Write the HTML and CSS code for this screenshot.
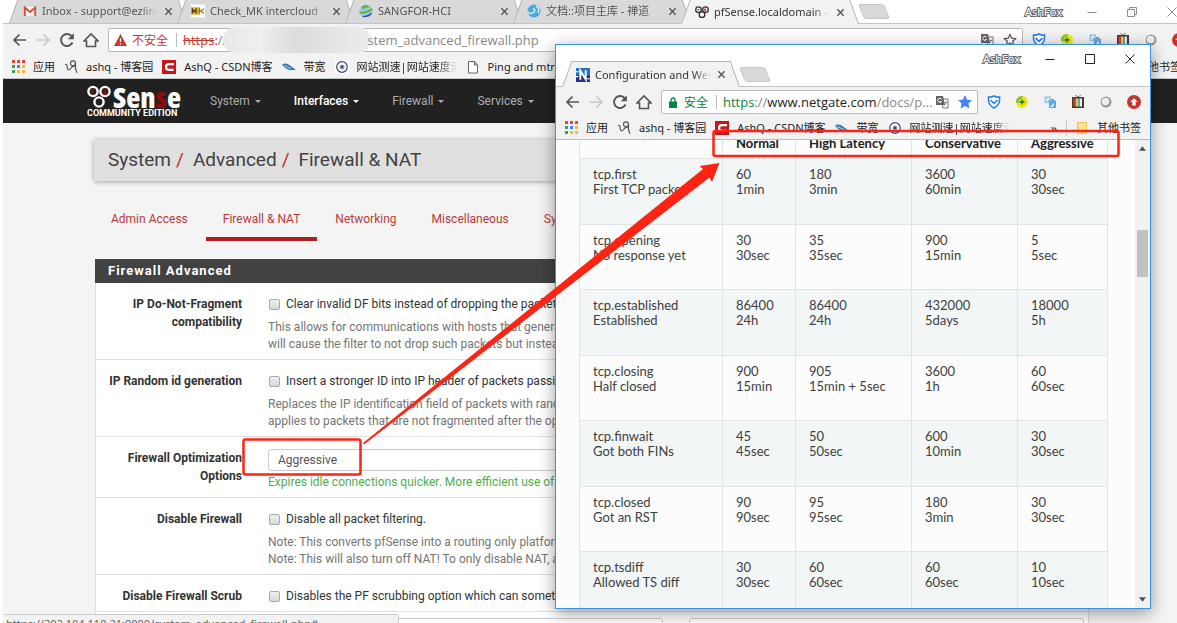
FILE: index.html
```html
<!DOCTYPE html>
<html lang="zh-CN">
<head>
<meta charset="utf-8">
<title>pfSense.localdomain - System: Advanced: Firewall &amp; NAT</title>
<link rel="stylesheet" href="styles.css">
</head>
<body>
<svg class="defs" aria-hidden="true">
  <symbol id="i-back" viewBox="0 0 16 16"><path d="M15 8H3M8.500 2.500L3 8l5.500 5.500" fill="none" stroke="currentColor" stroke-width="1.700"/></symbol>
  <symbol id="i-fwd" viewBox="0 0 16 16"><path d="M2 8h12M8.500 2.500L14 8l-5.500 5.500" fill="none" stroke="currentColor" stroke-width="1.700"/></symbol>
  <symbol id="i-reload" viewBox="0 0 16 16"><path d="M13.500 10.500A6 6 0 1 1 12.800 4.300" fill="none" stroke="currentColor" stroke-width="1.900"/><path d="M14.800 1.200v6H8.800z" fill="currentColor"/></symbol>
  <symbol id="i-home" viewBox="0 0 16 16"><path d="M1 9L8 2l7 7H12.500v5.500h-9V9z" fill="none" stroke="currentColor" stroke-width="1.600"/></symbol>
  <symbol id="i-close" viewBox="0 0 10 10"><path d="M1.500 1.500l7 7M8.500 1.500l-7 7" stroke="currentColor" stroke-width="1.500"/></symbol>
  <symbol id="i-x" viewBox="0 0 12 12"><path d="M1.500 1.500l9 9M10.500 1.500l-9 9" stroke="currentColor" stroke-width="1"/></symbol>
  <symbol id="i-min" viewBox="0 0 12 12"><path d="M1.500 6.500h9" stroke="currentColor"/></symbol>
  <symbol id="i-max" viewBox="0 0 12 12"><path d="M1.500 1.500h9v9h-9z" fill="none" stroke="currentColor"/></symbol>
  <symbol id="i-restore" viewBox="0 0 12 12"><path d="M3.500 3.500v-2h7v7h-2M1.500 3.500h7v7h-7z" fill="none" stroke="currentColor"/></symbol>
  <symbol id="i-apps" viewBox="0 0 13 13"><g><path d="M0 0h3v3H0zM5 0h3v3H5zM10 0h3v3h-3z" fill="#e8453c"/><path d="M0 5h3v3H0z" fill="#34a853"/><path d="M5 5h3v3H5z" fill="#4285f4"/><path d="M10 5h3v3h-3z" fill="#f9bb2d"/><path d="M0 10h3v3H0z" fill="#34a853"/><path d="M5 10h3v3H5zM10 10h3v3h-3z" fill="#f9bb2d"/></g></symbol>
  <symbol id="i-sig" viewBox="0 0 14 14"><g fill="none" stroke="#555" stroke-width="1.200"><circle cx="9" cy="3.300" r="2.500"/><path d="M11.500 3.300v5.500l1.500 4M1 4.500c2-1 2 1 2.300 3.500s2.200 2.500 3.700 0 3-1.500 4.500-2"/></g></symbol>
  <symbol id="i-csdn" viewBox="0 0 14 14"><path d="M0 0h14v14H0z" fill="#c8141b"/><path d="M12 4.200H7Q4 4.200 4 7t3 2.800h4.500" fill="none" stroke="#fff" stroke-width="2.200"/></symbol>
  <symbol id="i-band" viewBox="0 0 14 14"><path d="M0 4.500c3-2 6-1 8 1l6 4.500-4 0C6 10 2 8 0 4.500z" fill="#2f79b5"/><path d="M2 5.500l7 3" stroke="#b8d4ea"/></symbol>
  <symbol id="i-eye" viewBox="0 0 14 14"><path d="M0 0h14v14H0z" fill="#fff"/><circle cx="7" cy="7" r="5.300" fill="none" stroke="#3d4470" stroke-width="1.200"/><circle cx="7" cy="7" r="2" fill="#3d4470" stroke="#9fa4c4" stroke-width="1.200"/></symbol>
  <symbol id="i-page" viewBox="0 0 14 14"><path d="M2.500 1.500h6L11.500 5v8h-9zM8.500 1.500V5h3" fill="#fff" stroke="#666"/></symbol>
  <symbol id="i-translate" viewBox="0 0 14 14"><path d="M6 4h7v9H8z" fill="#fff" stroke="#777"/><path d="M1 1h7l2 9H1z" fill="#666"/><path d="M6.500 4.300A2 2 0 1 0 6.500 6.500H5" fill="none" stroke="#fff"/><path d="M9.500 7.500h3M11 6.500v1q-.5 2-1.500 3" fill="none" stroke="#777" stroke-width=".8"/></symbol>
  <symbol id="i-star" viewBox="0 0 14 14"><path d="M7 1.500l1.700 3.700 4 .4-3 2.700.9 4L7 10.200l-3.600 2.100.9-4-3-2.700 4-.4z" stroke="currentColor" stroke-width="1.200"/></symbol>
  <symbol id="i-shield" viewBox="0 0 14 14"><path d="M7 1q3 1.500 5.500 1v3.500Q12 10.500 7 13 2 10.500 1.500 5.500V2Q4 2.500 7 1z" fill="#fff" stroke="#2d7ff0" stroke-width="1.600"/><path d="M3.500 5L7 8.300 10.500 5" fill="none" stroke="#2d7ff0" stroke-width="1.700"/></symbol>
  <symbol id="i-plus" viewBox="0 0 14 14"><circle cx="7" cy="7" r="6" fill="#f4e41a"/><path d="M1 8A6 6 0 0 1 8 1L7 3.500Q4 4 3.500 8z" fill="#8ac43a"/><path d="M7 4.500v5M4.500 7h5" stroke="#348c2b" stroke-width="1.800"/></symbol>
  <symbol id="i-sync" viewBox="0 0 14 14"><path d="M1.500 1.500H8v6.500H1.500z" fill="#8fc8ee"/><path d="M6 5.500h7V13H6z" fill="#5da8df"/><path d="M3.500 6.500q0-3 3-3M10.500 8.500q0 3-3 3" fill="none" stroke="#fff" stroke-width="1.300"/><path d="M8 4h3l-1.500 2z" fill="#2f7fbf"/></symbol>
  <symbol id="i-tv" viewBox="0 0 14 14"><path d="M4 0l3 2 3-2" fill="none" stroke="#888"/><path d="M1 2h12v11H1z" fill="#4a3a35"/><path d="M2.500 3.500h2.500v8H2.500z" fill="#d5453a"/><path d="M5 3.500h2v8H5z" fill="#f3c33c"/><path d="M7 3.500h2v8H7z" fill="#4eb2bd"/><path d="M9 3.500h2v8H9z" fill="#eee"/></symbol>
  <symbol id="i-ball" viewBox="0 0 14 14"><circle cx="7" cy="7" r="5.500" fill="#999"/><circle cx="6.500" cy="6.500" r="3.800" fill="#eee"/></symbol>
  <symbol id="i-up" viewBox="0 0 14 14"><circle cx="7" cy="7" r="7" fill="#c5372c"/><path d="M7 3.200L10.800 7H8.700v3.500H5.300V7H3.200z" fill="#fff"/></symbol>
  <symbol id="i-folder" viewBox="0 0 12 14"><path d="M1.500 1.500h9v11h-9z" fill="#fce28c" stroke="#e8c052"/></symbol>
  <symbol id="i-gmail" viewBox="0 0 14 14"><path d="M1 2.500h12v9.500H1z" fill="#f1f1f1"/><path d="M1.800 12V3.500L7 8l5.200-4.500V12" fill="none" stroke="#dd4b3e" stroke-width="1.900"/></symbol>
  <symbol id="i-mk" viewBox="0 0 15 14"><path d="M0 0h15v14H0z" fill="#fff"/><path d="M0 3h9.500v8H0z" fill="#f0b323"/><path d="M1.500 10V5l2 3 2-3v5" fill="none" stroke="#4c3d17" stroke-width="1.200"/><path d="M14 4.500l-4 2.500 4 2.500M9.500 4l-1 3 1 3" fill="none" stroke="#8d6f1c" stroke-width="1.200"/></symbol>
  <symbol id="i-globe" viewBox="0 0 14 14"><circle cx="7" cy="7" r="6.500" fill="#9ccbe6"/><path d="M2 3q5-4 9 0L4 5zM0 8q7 0 13-4l.5 2Q8 10 1 10z" fill="#67b246"/><path d="M3 12q6 0 10-4l-1 3q-4 3-8 2z" fill="#2c5b97"/></symbol>
  <symbol id="i-zen" viewBox="0 0 14 14"><circle cx="7" cy="7" r="6.500" fill="#4ba7df"/><path d="M1 8q3 3 6 0 2-3-1-3M9 2q4 2 2 7" fill="none" stroke="#d9f1ff" stroke-width="1.500"/></symbol>
  <symbol id="i-pf" viewBox="0 0 16 14"><g fill="#fff" stroke="currentColor" stroke-width="1.500"><circle cx="4" cy="4.300" r="3.200"/><circle cx="12" cy="4.300" r="3.200"/><circle cx="8" cy="10" r="3.200"/></g><path d="M3 4.300h2M11.500 3v3" stroke="#9a0a0e" stroke-width="1.500"/></symbol>
  <symbol id="i-net" viewBox="0 0 13 13"><path d="M0 0h13v13H0z" fill="#2374bd"/><path d="M0 7h13v6H0z" fill="#2c2e83"/><path d="M0 3.500h3M10 10h3M0 8h2" stroke="#fff"/><path d="M4 11V2.500l5 8V2" fill="none" stroke="#fff" stroke-width="1.800"/></symbol>
</svg>

<div class="desktop">
  <main class="browser">
    <div class="strip">
      <div class="tabs">
        <div class="tab"><svg class="ic"><use href="#i-gmail"/></svg><span class="tab-title">Inbox - support@ezlink</span><button class="tab-close" aria-label="Close tab"><svg><use href="#i-close"/></svg></button></div>
        <div class="tab"><svg class="ic"><use href="#i-mk"/></svg><span class="tab-title">Check_MK intercloud -</span><button class="tab-close" aria-label="Close tab"><svg><use href="#i-close"/></svg></button></div>
        <div class="tab"><svg class="ic"><use href="#i-globe"/></svg><span class="tab-title">SANGFOR-HCI</span><button class="tab-close" aria-label="Close tab"><svg><use href="#i-close"/></svg></button></div>
        <div class="tab"><svg class="ic"><use href="#i-zen"/></svg><span class="tab-title">文档::项目主库 - 禅道</span><button class="tab-close" aria-label="Close tab"><svg><use href="#i-close"/></svg></button></div>
        <div class="tab tab-on"><svg class="ic"><use href="#i-pf"/></svg><span class="tab-title">pfSense.localdomain -</span><button class="tab-close" aria-label="Close tab"><svg><use href="#i-close"/></svg></button></div>
        <button class="newtab" aria-label="New tab"></button>
      </div>
      <div class="controls controls-dim"><span class="user">AshFox</span><button aria-label="Minimize"><svg><use href="#i-min"/></svg></button><button aria-label="Restore"><svg><use href="#i-restore"/></svg></button><button aria-label="Close"><svg><use href="#i-x"/></svg></button></div>
    </div>
    <div class="toolbar">
      <button class="nav" aria-label="Back"><svg><use href="#i-back"/></svg></button><button class="nav nav-off" aria-label="Forward"><svg><use href="#i-fwd"/></svg></button><button class="nav" aria-label="Reload"><svg><use href="#i-reload"/></svg></button><button class="nav" aria-label="Home"><svg><use href="#i-home"/></svg></button>
      <div class="omni">
        <svg class="warn" viewBox="0 0 13 12"><path d="M6.500 0L13 12H0z" fill="#c5372c"/><path d="M6.500 4v4M6.500 9v1.500" stroke="#fff" stroke-width="1.300"/></svg>
        <span class="insecure">不安全</span><span class="bar"></span><span class="url"><s>https</s><em>:</em>//</span>
        <span class="mosaic"></span><span class="url">stem_advanced_firewall.php</span>
        <span class="omni-end"><svg class="ic"><use href="#i-translate"/></svg><svg class="ic star"><use href="#i-star"/></svg></span>
      </div>
      <div class="exts"><svg><use href="#i-shield"/></svg><svg><use href="#i-plus"/></svg><svg><use href="#i-sync"/></svg><svg><use href="#i-tv"/></svg><svg><use href="#i-ball"/></svg><svg><use href="#i-up"/></svg></div>
    </div>
    <nav class="marks">
      <a href="#"><svg class="apps"><use href="#i-apps"/></svg>应用</a>
      <a href="#"><svg class="ic"><use href="#i-sig"/></svg>ashq - 博客园</a>
      <a href="#"><svg class="ic"><use href="#i-csdn"/></svg>AshQ - CSDN博客</a>
      <a href="#"><svg class="ic"><use href="#i-band"/></svg>带宽</a>
      <a href="#"><svg class="ic"><use href="#i-eye"/></svg><span class="fade">网站测速|网站速度测</span></a>
      <a href="#"><svg class="ic"><use href="#i-page"/></svg>Ping and mtr</a>
      <a class="marks-other" href="#">其他书签</a>
    </nav>

    <header class="pfnav">
      <a class="logo" href="#" aria-label="pfSense Community Edition">
        <span class="logo-row"><svg class="logo-mark" viewBox="0 0 24 24"><g fill="#222" stroke="#fff" stroke-width="2.400"><circle cx="6" cy="6.500" r="4.600"/><circle cx="18" cy="6.500" r="4.600"/><circle cx="12" cy="17" r="4.600"/></g><path d="M5.500 4v5M18 4v6" stroke="#8d0a0d" stroke-width="3"/></svg><b>Sen<i>s</i>e</b></span>
        <span class="logo-sub">COMMUNITY EDITION</span>
      </a>
      <nav class="menu"><a href="#">System</a><a class="menu-on" href="#">Interfaces</a><a href="#">Firewall</a><a href="#">Services</a></nav>
    </header>

    <div class="page">
      <h1 class="crumbs">System<i>/</i>Advanced<i>/</i>Firewall &amp; NAT</h1>
      <nav class="subtabs"><a href="#">Admin Access</a><a class="sub-on" href="#">Firewall &amp; NAT</a><a href="#">Networking</a><a href="#">Miscellaneous</a><a href="#">System Tunables</a></nav>
      <form class="panel">
        <h2>Firewall Advanced</h2>
        <div class="row">
          <div class="label">IP Do-Not-Fragment compatibility</div>
          <div class="field"><label><input type="checkbox">Clear invalid DF bits instead of dropping the packets</label>
            <p>This allows for communications with hosts that generate fragmented packets<br>will cause the filter to not drop such packets but instead clear the bit</p></div>
        </div>
        <div class="row">
          <div class="label">IP Random id generation</div>
          <div class="field"><label><input type="checkbox">Insert a stronger ID into IP header of packets passing</label>
            <p>Replaces the IP identification field of packets with random values<br>applies to packets that are not fragmented after the optional</p></div>
        </div>
        <div class="row">
          <label class="label" for="opt">Firewall Optimization Options</label>
          <div class="field"><select id="opt"><option>Aggressive</option></select><p class="good">Expires idle connections quicker. More efficient use of CPU</p></div>
        </div>
        <div class="row">
          <div class="label">Disable Firewall</div>
          <div class="field"><label><input type="checkbox">Disable all packet filtering.</label>
            <p>Note: This converts pfSense into a routing only platform!<br>Note: This will also turn off NAT! To only disable NAT, and</p></div>
        </div>
        <div class="row">
          <div class="label">Disable Firewall Scrub</div>
          <div class="field"><label><input type="checkbox">Disables the PF scrubbing option which can sometimes</label></div>
        </div>
        <div class="row row-last">
          <div class="label"></div>
          <div class="field pair"><input type="text" aria-label="Adaptive start"><input type="text" aria-label="Adaptive end"></div>
        </div>
      </form>
    </div>
    <div class="status">https://202.104.118.21:9090/system_advanced_firewall.php#</div>
  </main>

  <section class="browser popup">
    <div class="strip">
      <div class="tabs">
        <div class="tab tab-on"><svg class="ic"><use href="#i-net"/></svg><span class="tab-title">Configuration and Web</span><button class="tab-close" aria-label="Close tab"><svg><use href="#i-close"/></svg></button></div>
        <button class="newtab" aria-label="New tab"></button>
      </div>
      <div class="controls"><span class="user">AshFox</span><button aria-label="Minimize"><svg><use href="#i-min"/></svg></button><button aria-label="Maximize"><svg><use href="#i-max"/></svg></button><button aria-label="Close"><svg><use href="#i-x"/></svg></button></div>
    </div>
    <div class="toolbar">
      <button class="nav" aria-label="Back"><svg><use href="#i-back"/></svg></button><button class="nav nav-off" aria-label="Forward"><svg><use href="#i-fwd"/></svg></button><button class="nav" aria-label="Reload"><svg><use href="#i-reload"/></svg></button><button class="nav" aria-label="Home"><svg><use href="#i-home"/></svg></button>
      <div class="omni">
        <svg class="lock" viewBox="0 0 8 11"><path d="M2 5V3a2 2 0 0 1 4 0v2" fill="none" stroke="#0b8043" stroke-width="1.300"/><path d="M0 4.500h8V11H0z" fill="#0b8043"/></svg>
        <span class="secure">安全</span><span class="bar"></span><span class="url"><span class="secure">https</span>://<b>www.netgate.com</b>/docs/p...</span>
        <span class="omni-end"><svg class="ic"><use href="#i-translate"/></svg><svg class="ic star star-on"><use href="#i-star"/></svg></span>
      </div>
      <div class="exts"><svg><use href="#i-shield"/></svg><svg><use href="#i-plus"/></svg><svg><use href="#i-sync"/></svg><svg><use href="#i-tv"/></svg><svg><use href="#i-ball"/></svg><svg><use href="#i-up"/></svg></div>
    </div>
    <nav class="marks">
      <a href="#"><svg class="apps"><use href="#i-apps"/></svg>应用</a>
      <a href="#"><svg class="ic"><use href="#i-sig"/></svg>ashq - 博客园</a>
      <a href="#"><svg class="ic"><use href="#i-csdn"/></svg>AshQ - CSDN博客</a>
      <a href="#"><svg class="ic"><use href="#i-band"/></svg>带宽</a>
      <a href="#"><svg class="ic"><use href="#i-eye"/></svg><span class="fade">网站测速|网站速度测</span></a>
      <span class="more">»</span>
      <a class="marks-folder" href="#"><svg class="ic"><use href="#i-folder"/></svg>其他书签</a>
    </nav>
    <div class="view">
      <table>
        <colgroup><col class="c1"><col class="c2"><col class="c3"><col class="c4"><col class="c5"></colgroup>
        <thead><tr><th></th><th>Normal</th><th>High Latency</th><th>Conservative</th><th>Aggressive</th></tr></thead>
        <tbody>
          <tr><td>tcp.first<br>First TCP packet</td><td>60<br>1min</td><td>180<br>3min</td><td>3600<br>60min</td><td>30<br>30sec</td></tr>
          <tr><td>tcp.opening<br>No response yet</td><td>30<br>30sec</td><td>35<br>35sec</td><td>900<br>15min</td><td>5<br>5sec</td></tr>
          <tr><td>tcp.established<br>Established</td><td>86400<br>24h</td><td>86400<br>24h</td><td>432000<br>5days</td><td>18000<br>5h</td></tr>
          <tr><td>tcp.closing<br>Half closed</td><td>900<br>15min</td><td>905<br>15min + 5sec</td><td>3600<br>1h</td><td>60<br>60sec</td></tr>
          <tr><td>tcp.finwait<br>Got both FINs</td><td>45<br>45sec</td><td>50<br>50sec</td><td>600<br>10min</td><td>30<br>30sec</td></tr>
          <tr><td>tcp.closed<br>Got an RST</td><td>90<br>90sec</td><td>95<br>95sec</td><td>180<br>3min</td><td>30<br>30sec</td></tr>
          <tr><td>tcp.tsdiff<br>Allowed TS diff</td><td>30<br>30sec</td><td>60<br>60sec</td><td>60<br>60sec</td><td>10<br>10sec</td></tr>
        </tbody>
      </table>
      <div class="scroll"><svg viewBox="0 0 8 5"><path d="M0 5l4-5 4 5z" fill="#505050"/></svg><span class="thumb"></span><svg viewBox="0 0 8 5"><path d="M0 0l4 5 4-5z" fill="#505050"/></svg></div>
    </div>
  </section>

  <svg class="marker" aria-hidden="true">
    <g fill="none" stroke="#ff2314" stroke-width="2.500"><rect x="243.500" y="439.500" width="117" height="35" rx="2"/><rect x="713.500" y="131" width="405" height="25" rx="2"/></g>
    <path d="M363 443L703 169 699.500 166 719.500 163 712 182 709.500 177.500 364 444.500z" fill="#ff2314"/>
  </svg>
</div>
</body>
</html>
```
FILE: styles.css
```css
* { box-sizing: border-box; }
body { margin: 0; background: #fff; font-family: "Noto Sans", "Noto Sans CJK SC", sans-serif; font-size: 12px; color: #333; }
button { border: 0; padding: 0; background: none; color: inherit; font: inherit; display: flex; }
a { color: inherit; text-decoration: none; }
.defs { position: absolute; width: 0; height: 0; }
.desktop { position: relative; height: 100vh; overflow: hidden; }

.browser { display: flex; flex-direction: column; background: #fff; }
main.browser { height: 100%; margin-left: 3px; }
.popup { position: absolute; left: 555px; top: 44px; width: 596px; height: 565px; border: 1px solid #3a92dc; box-shadow: 0 4px 16px rgba(0, 0, 0, .4); }

/* tab strip */
.strip { display: flex; justify-content: space-between; flex: none; height: 24px; border-bottom: 1px solid #c4c4c4; }
.tabs { display: flex; align-items: flex-end; padding-left: 6px; }
.tab { position: relative; z-index: 0; display: flex; align-items: center; width: 178px; height: 24px; margin-right: -10px; padding: 0 10px 0 14px; font-size: 11px; color: #555; }
.tab::before, .tab::after { content: ""; position: absolute; z-index: -1; top: -1px; bottom: 0; background: #d9d9d9; border-top: 1px solid #b5b5b5; }
.tab::before { left: 0; right: 50%; border-left: 1px solid #b5b5b5; transform: skewX(-20deg); transform-origin: bottom; }
.tab::after { right: 0; left: 40%; border-right: 1px solid #b5b5b5; transform: skewX(20deg); transform-origin: bottom; }
.tab-on { z-index: 2; color: #333; margin-bottom: -1px; }
.tab-on::before, .tab-on::after { background: #f2f2f2; }
.tab .ic { margin-right: 5px; }
.tab-title { flex: 1; min-width: 0; overflow: hidden; white-space: nowrap; line-height: 18px; -webkit-mask-image: linear-gradient(90deg, #000 85%, transparent); mask-image: linear-gradient(90deg, #000 85%, transparent); }
.tab-close { margin: 0 4px 0 6px; }
.tab-close svg { width: 9px; height: 9px; color: #555; }
.newtab { width: 26px; height: 15px; margin: 0 0 4px 12px; background: #d9d9d9; border: 1px solid #c6c6c6; border-radius: 3px; transform: skewX(22deg); }
.ic { flex: none; width: 14px; height: 14px; }
.controls { display: flex; align-items: center; gap: 28px; padding-right: 14px; height: 27px; color: #222; }
.controls svg { width: 12px; height: 12px; }
.controls-dim { color: #8a8a8a; padding-right: 0; height: 23px; margin-right: -1px; }
.user { font-size: 11px; color: #fff; -webkit-text-stroke: 2px #666; paint-order: stroke fill; margin-right: -4px; }

/* toolbar */
.toolbar { display: flex; align-items: center; flex: none; height: 31px; padding: 0 0 0 8px; background: #f2f2f2; overflow: hidden; }
.nav { margin-right: 8px; color: #555; }
.nav svg { width: 16px; height: 16px; }
.nav-off { color: #c8c8c8; }
.omni { display: flex; align-items: center; flex: 1; min-width: 0; height: 24px; margin-left: 1px; padding: 0 5px; border: 1px solid #b9b9b9; border-radius: 2px; background: #fff; white-space: nowrap; font-size: 12px; }
.warn { width: 13px; height: 12px; margin-right: 5px; }
.lock { width: 8px; height: 11px; margin: 0 7px 0 2px; }
.insecure, .url s, .url em { color: #c5372c; font-style: normal; }
.secure { color: #0b8043; }
.bar { width: 1px; height: 14px; margin: 0 6px 0 8px; background: #bbb; }
.url { font-family: "Open Sans", sans-serif; font-size: 13px; color: #888; }
.url b { color: #222; font-weight: 400; }
.mosaic { width: 148px; height: 26px; margin: 0 -4px; border-radius: 13px; background: linear-gradient(90deg, #e8e8e8, #f0eeee 25%, #dcdcdc 50%, #e6e4e4 75%, #ededed); }
.omni-end { display: flex; gap: 9px; margin-left: auto; }
.star { color: #555; fill: none; }
.star-on { color: #4285f4; fill: #4285f4; }
.exts { display: flex; gap: 14px; padding-left: 9px; }
.exts svg { flex: none; width: 14px; height: 14px; }
main .exts { margin-right: -9px; }
.popup .exts { padding-right: 9px; }

/* bookmarks */
.marks { display: flex; align-items: center; flex: none; height: 24px; padding: 0 9px; gap: 9px; background: #f2f2f2; border-bottom: 1px solid #c4c4c4; font-size: 11px; line-height: 16px; color: #222; white-space: nowrap; overflow: hidden; }
.marks a { display: flex; align-items: center; gap: 8px; }
.apps { width: 13px; height: 13px; }
.fade { width: 100px; overflow: hidden; -webkit-mask-image: linear-gradient(90deg, #000 80%, transparent); mask-image: linear-gradient(90deg, #000 80%, transparent); }
.marks .marks-other { margin: 0 -13px 0 auto; }
.more { margin-left: auto; font-size: 13px; }
.marks-folder { padding-left: 8px; border-left: 1px solid #ccc; }

/* pfSense page */
.pfnav { display: flex; align-items: center; flex: none; height: 44px; padding-left: 84px; background: #212121; font-family: Roboto, sans-serif; }
.logo { display: flex; flex-direction: column; width: 96px; color: #fff; }
.logo-row { display: flex; align-items: center; height: 24px; }
.logo-mark { width: 24px; height: 24px; }
.logo b { margin-left: 2px; font: 900 29px/24px "Open Sans", sans-serif; font-stretch: condensed; }
.logo i { font-style: normal; color: #8d0a0d; }
.logo-sub { font-size: 9px; line-height: 9px; font-weight: 700; white-space: nowrap; }
.menu { display: flex; gap: 33px; margin-left: 27px; font-size: 12px; color: #adadad; }
.menu a { display: flex; align-items: center; gap: 5px; }
.menu a::after { content: ""; border: 3px solid transparent; border-top-color: currentColor; border-bottom: 0; }
.menu .menu-on { color: #fff; font-weight: 500; }
.page { flex: 1; min-height: 0; overflow: hidden; padding: 16px 88px 0 92px; background: #f4f4f4; font-family: Roboto, sans-serif; }
.crumbs { margin: 0 0 0 -1px; padding: 0 14px; font-size: 19px; font-weight: 400; line-height: 42px; color: #424242; background: #e0e0e0; border-radius: 2px; box-shadow: 0 1px 5px rgba(0, 0, 0, .35); }
.crumbs i { color: #c62828; font-style: normal; margin: 0 9px 0 5px; }
.subtabs { display: flex; gap: 1px; margin-top: 22px; padding-left: 1px; font-size: 12px; color: #b93a3a; }
.subtabs a { padding: 8px 17px 10px; line-height: 16px; border-bottom: 4px solid transparent; white-space: nowrap; }
.subtabs a:first-child { padding-left: 15px; }
.subtabs .sub-on { border-color: #b71c1c; }
.panel { margin-top: 18px; background: #fff; border: 1px solid #ddd; border-top: 0; }
.panel h2 { margin: 0 -1px; padding: 0 13px; font-size: 13px; line-height: 24px; letter-spacing: 1px; color: #fff; background: #424242; }
.row { display: flex; min-height: 37px; padding: 12px 0 6px; border-bottom: 1px solid #e0e0e0; line-height: 18px; }
.label { flex: none; width: 146px; font-weight: 700; text-align: right; color: #333; }
.field { flex: 1; min-width: 0; padding-left: 26px; white-space: nowrap; overflow: hidden; }
.field label { display: flex; align-items: center; }
.field input[type=checkbox] { appearance: none; width: 11px; height: 11px; margin: 0 6px 0 1px; border: 1px solid #aaa; border-radius: 2px; background: linear-gradient(#eee, #d8d8d8); }
.field p { margin: 6px 0 0; line-height: 17px; color: #757575; }
.field select { display: block; width: 100%; height: 22px; padding: 0 9px; border: 1px solid #ccc; border-radius: 3px; background: #fff; color: #555; font: 12px Roboto, sans-serif; appearance: none; }
.field .good { margin-top: 3px; color: #4caf50; }
.row-last { padding-top: 6px; border: 0; }
.pair { display: flex; gap: 26px; padding-right: 4px; }
.pair input { flex: 1; min-width: 0; height: 22px; border: 1px solid #ccc; border-radius: 3px; }
.status { position: absolute; left: 3px; bottom: -9px; width: 396px; height: 18px; padding-left: 3px; font-size: 11px; line-height: 18px; color: #666; background: #f2f2f2; border: 1px solid #ccc; border-left: 0; border-radius: 0 3px 0 0; }

/* floating window */
.popup .strip { height: 42px; }
.popup .tab { height: 25px; }
.popup .toolbar { height: 30px; }
.popup .marks { height: 23px; padding-bottom: 1px; border-color: #bbb; }
.view { display: flex; justify-content: space-between; flex: 1; min-height: 0; overflow: hidden; padding-left: 23px; background: #fcfcfc; font-family: Lato, sans-serif; }
table { align-self: flex-start; table-layout: fixed; border-collapse: collapse; width: 528px; margin-top: -10px; font-size: 13px; line-height: 15px; color: #404040; }
th, td { padding: 8px 14px 0 13px; border: 1px solid #e1e4e5; text-align: left; vertical-align: top; white-space: nowrap; }
th { height: 28px; padding-top: 5px; font-weight: 700; color: #222; }
td { height: 65px; }
tr:nth-child(odd) td { height: 66px; background: #f3f6f6; }
.c1 { width: 143px; } .c2 { width: 73px; } .c3 { width: 116px; } .c4 { width: 106px; } .c5 { width: 90px; }
.scroll { display: flex; flex-direction: column; align-items: center; width: 15px; padding: 6px 0; background: #f1f1f1; }
.scroll svg { width: 7px; height: 5px; }
.thumb { width: 11px; height: 47px; margin: 79px 0 auto; background: #c1c1c1; }

.marker { position: absolute; inset: 0; width: 100%; height: 100%; pointer-events: none; }
```
